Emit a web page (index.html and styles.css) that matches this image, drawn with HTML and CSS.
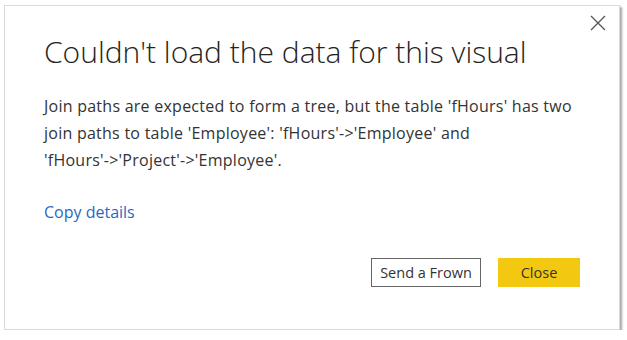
FILE: index.html
```html
<!DOCTYPE html>
<html>
<head>
<meta charset="utf-8">
<link rel="stylesheet" href="styles.css">
</head>
<body>
<div class="dialog">
  <button class="close-x" aria-label="Close">
    <svg width="16" height="16" viewBox="0 0 16 16"><path d="M1 1 L15 15 M15 1 L1 15" stroke="#555" stroke-width="1.3" fill="none"/></svg>
  </button>
  <h1 class="title">Couldn't load the data for this visual</h1>
  <p class="message">Join paths are expected to form a tree, but the table 'fHours' has two join paths to table 'Employee': <span class="nowrap">'fHours'-&gt;'Employee'</span> and <span class="nowrap">'fHours'-&gt;'Project'-&gt;'Employee'.</span></p>
  <a class="copy" href="#">Copy details</a>
  <div class="actions">
    <button class="btn btn-secondary">Send a Frown</button>
    <button class="btn btn-primary">Close</button>
  </div>
</div>
</body>
</html>
```
FILE: styles.css
```css
html, body { margin: 0; padding: 0; background: #fff; }
body { padding: 5px 0 0 4px; }
.dialog {
  position: relative;
  box-sizing: border-box;
  width: 616px;
  height: 325px;
  background: #fff;
  border: 1px solid #dadada;
  box-shadow: 2px 2px 2px rgba(0,0,0,0.35);
  padding: 0 0 0 39px;
  font-family: "Open Sans", sans-serif;
  color: #333;
  display: flex;
  flex-direction: column;
}
.close-x {
  position: absolute;
  top: 9px;
  right: 13px;
  border: 0;
  background: none;
  padding: 0;
  width: 16px;
  height: 16px;
}
.title {
  margin: 26px 0 0 0;
  font-weight: 300;
  font-size: 30px;
  line-height: 40px;
  color: #252423;
}
.message {
  margin: 21px 0 0 0;
  max-width: 540px;
  font-size: 16px;
  letter-spacing: 0.25px;
  line-height: 27px;
  color: #333;
}
.nowrap { white-space: nowrap; }
.copy {
  margin-top: 27px;
  font-size: 16px;
  color: #1f6bbf;
  text-decoration: none;
  align-self: flex-start;
}
.actions {
  margin-top: 35px;
  display: flex;
  justify-content: flex-end;
  gap: 17px;
  padding-right: 39px;
}
.btn {
  height: 29px;
  font-family: "Open Sans", sans-serif;
  font-size: 14.5px;
  color: #333;
  padding: 0;
  box-sizing: border-box;
}
.btn-secondary { width: 110px; background: #fff; border: 1px solid #666; }
.btn-primary { width: 82px; background: #f2c811; border: 1px solid #f2c811; }
```
